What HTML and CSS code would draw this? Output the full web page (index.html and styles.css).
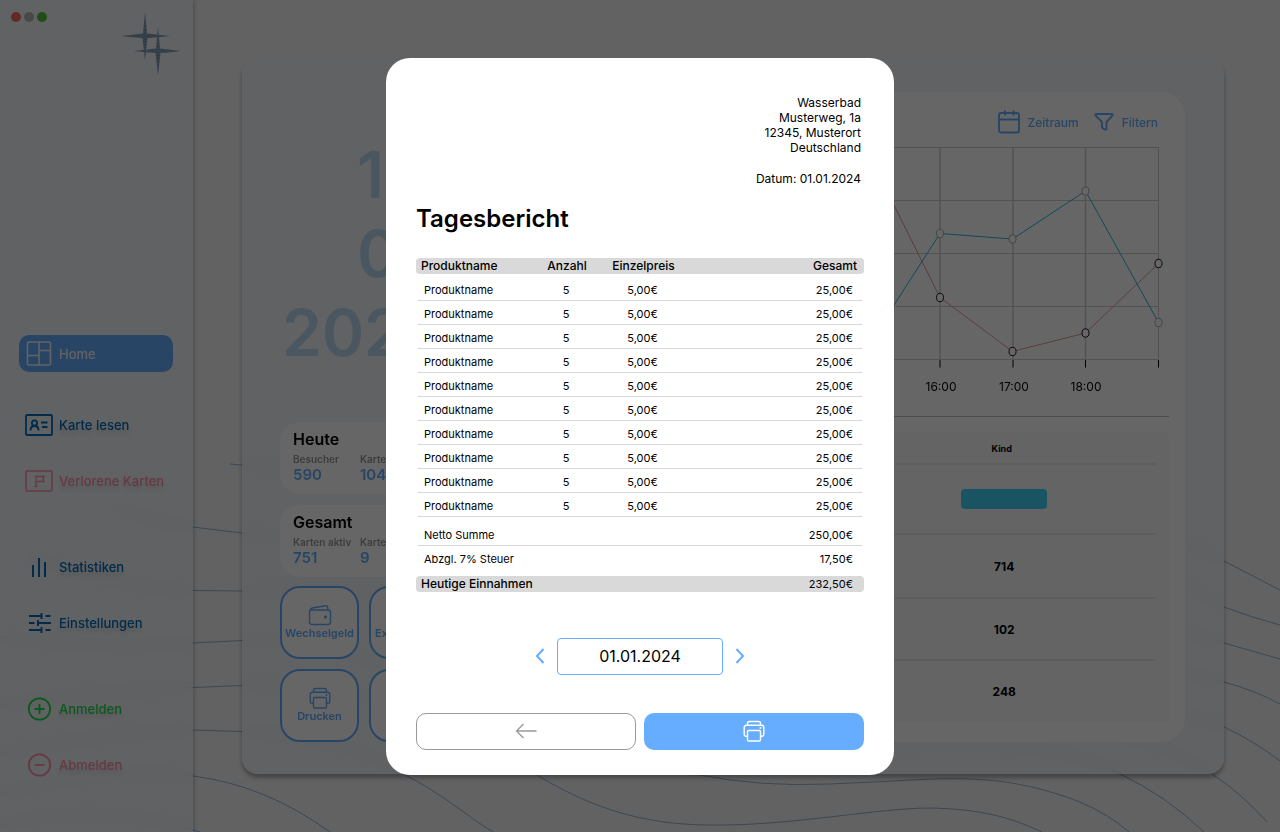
FILE: index.html
```html
<!DOCTYPE html>
<html lang="de">
<head>
<meta charset="utf-8">
<meta name="viewport" content="width=device-width, initial-scale=1">
<title>Tagesbericht</title>
<link rel="stylesheet" href="styles.css">
</head>
<body>
<svg width="0" height="0" class="defs" aria-hidden="true">
  <symbol id="printer" viewBox="0 0 22 22">
    <g fill="none" stroke="currentColor" stroke-width="1.4" stroke-linejoin="round">
      <path d="M4.5 5.2V3.4Q4.5 1.5 6.4 1.5h9.2q1.9 0 1.9 1.9v1.8"/>
      <path d="M4 16.3H3.2Q1.2 16.3 1.2 14.3V7.6Q1.2 5.2 3.6 5.2h14.8q2.4 0 2.4 2.4v6.7q0 2-2 2H18"/>
      <rect x="4.5" y="10.5" width="13" height="10.5" rx="1.2"/>
      <path d="M16.6 8h1.6" stroke-width="1.8"/>
    </g>
  </symbol>
</svg>

<div class="app">
  <svg class="waves" viewBox="0 0 1280 832" preserveAspectRatio="none" aria-hidden="true">
    <path d="M230 464C330 475 390 430 500 400S800 330 1000 420S1120 510 1224 561L1280 590"/>
    <path d="M120 508C150 520 170 524 193 527L242 533C500 560 900 400 1224 607Q1250 617 1280 625"/>
    <path d="M30 558C100 580 150 590 193 590.500L242 591C600 590 900 560 1185 632L1224 643L1280 659"/>
    <path d="M0 637Q100 650 193 643L242 640.500C400 630 560 775 700 775Q760 787 830 784L894 781C960 777 1010 775 1080 802Q1110 815 1129 832"/>
    <path d="M0 706Q100 690 193 687.500L242 685.500C400 690 450 710 537 775C610 820 670 826 726 825C800 824 880 808 930 808C980 809 1010 817 1042 832"/>
    <path d="M0 754Q100 733 193 730L242 731.500C320 735 370 750 405 775C440 792 465 815 493 832"/>
    <path d="M0 795Q100 765 193 776Q265 785 330 832"/>
    <path d="M0 825Q100 802 193 830L200 832"/>
    <path d="M894 650C1020 650 1120 650 1185 673Q1205 677 1224 682Q1254 690 1280 704"/>
    <path d="M894 700C1000 685 1120 690 1185 714L1224 727Q1254 741 1280 761"/>
    <path d="M860 748C970 742 1050 738 1120 774Q1165 795 1204 832"/>
    <path d="M1080 732Q1150 732 1212 774Q1240 792 1267 822"/>
  </svg>

  <aside class="sidebar">
    <div class="sidebar-top">
      <div class="lights"><span class="light red"></span><span class="light gray"></span><span class="light green"></span></div>
      <svg class="logo" width="60" height="64" viewBox="0 0 60 64" role="img" aria-label="Logo">
        <defs>
          <pattern id="ripple" width="8" height="3" patternUnits="userSpaceOnUse" patternTransform="rotate(18)">
            <rect width="8" height="3" fill="#7390ab"/>
            <path d="M0 1.500Q2 .500 4 1.500T8 1.500" fill="none" stroke="#c3d3e2" stroke-width=".6"/>
          </pattern>
        </defs>
        <path fill="url(#ripple)" d="M24 0L26 21.500Q38 22.500 49 24Q38 25.500 26.500 26L24 48L21.500 26Q12 25.500 0 24Q12 22.500 22 21.500Z"/>
        <path fill="url(#ripple)" d="M37 15L39 36.500Q50 37.500 60 39Q50 40.500 39.500 41L37 63L34.500 41Q25 40.500 13 39Q25 37.500 35 36.500Z"/>
      </svg>
    </div>
    <nav class="nav">
      <div class="nav-group">
        <a class="nav-item active" href="#"><svg viewBox="0 0 28 28" width="28" height="28"><g fill="none" stroke="currentColor" stroke-width="1.600"><rect x="2.500" y="2" width="23" height="23" rx="1.500"/><path d="M14 2v23M2.500 15.500H14M14 10.500h11.500"/></g></svg>Home</a>
      </div>
      <div class="nav-group">
        <a class="nav-item" href="#"><svg viewBox="0 0 28 28" width="28" height="28"><g fill="none" stroke="currentColor" stroke-width="1.800"><rect x="1" y="4" width="26" height="20" rx="1"/><circle cx="9.500" cy="12" r="2.600"/><path d="M5.500 19.500q0-4.500 4-4.500t4 4.500M16 11.500h6.500M17 16h5.500"/></g></svg>Karte lesen</a>
        <a class="nav-item pink" href="#"><svg viewBox="0 0 28 28" width="28" height="28"><g fill="none" stroke="currentColor" stroke-width="1.600"><rect x="1" y="4" width="26" height="20" rx="1"/><path d="M11 19.500V9.500h8l-1 2.500 1 2.500h-8M9.500 19.500h3" stroke-width="1.300"/></g></svg>Verlorene Karten</a>
      </div>
      <div class="nav-group wide">
        <a class="nav-item" href="#"><svg viewBox="0 0 28 28" width="28" height="28"><path d="M8 12v12M14 5v19M20 9v15" stroke="currentColor" stroke-width="2"/></svg>Statistiken</a>
        <a class="nav-item" href="#"><svg viewBox="0 0 28 28" width="28" height="28"><path d="M4 7h12M20.500 7h5M16.500 4v6M4 14h5.500M13 14h13M13 11v6M4 21h12M20.500 21h5M16.500 18v6" stroke="currentColor" stroke-width="1.900"/></svg>Einstellungen</a>
      </div>
      <div class="nav-group wide">
        <a class="nav-item green" href="#"><svg viewBox="0 0 28 28" width="28" height="28"><g fill="none" stroke="currentColor" stroke-width="1.800"><circle cx="14.500" cy="14" r="10.700"/><path d="M14.500 9v10M9.500 14h10"/></g></svg>Anmelden</a>
        <a class="nav-item pink" href="#"><svg viewBox="0 0 28 28" width="28" height="28"><g fill="none" stroke="currentColor" stroke-width="1.800"><circle cx="14.500" cy="14" r="10.700"/><path d="M9.500 14h10"/></g></svg>Abmelden</a>
      </div>
    </nav>
  </aside>

  <main class="main">
    <div class="panel">
      <section class="overview">
        <div class="date"><span class="short">1</span><span class="short">0</span><span>202</span></div>
        <div class="card">
          <h2>Heute</h2>
          <dl><div><dt>Besucher</dt><dd>590</dd></div><div><dt>Karten</dt><dd>104</dd></div></dl>
        </div>
        <div class="card">
          <h2>Gesamt</h2>
          <dl><div><dt>Karten aktiv</dt><dd>751</dd></div><div><dt>Karten</dt><dd>9</dd></div></dl>
        </div>
        <div class="tiles">
          <button type="button" class="tile"><svg width="24" height="22" viewBox="0 0 24 22"><g fill="none" stroke="currentColor" stroke-width="1.400" stroke-linejoin="round"><rect x="1.500" y="6" width="21" height="14.500" rx="2.500"/><path d="M2 7Q2 4.500 4.500 4L17.500 1.700Q19.500 1.500 19.700 3.500V6"/></g><circle cx="17.500" cy="13" r="1.600" fill="currentColor"/></svg>Wechselgeld</button>
          <button type="button" class="tile cut">Ex</button>
          <button type="button" class="tile"><svg width="22" height="22"><use href="#printer"/></svg>Drucken</button>
          <button type="button" class="tile" aria-label="Weitere"></button>
        </div>
      </section>

      <section class="stats">
        <div class="tools">
          <button type="button"><svg width="22" height="24" viewBox="0 0 22 24"><g fill="none" stroke="currentColor" stroke-width="1.900"><rect x="1" y="3" width="20" height="19.500" rx="2"/><path d="M1 9.500h20M7 .500v5M15.500 .500v5"/></g></svg>Zeitraum</button>
          <button type="button"><svg width="20" height="20" viewBox="0 0 20 20"><path d="M1.500 2h17v1.500L12.500 10v7.500h-2L8 15.500V10L1.500 3.500Z" fill="none" stroke="currentColor" stroke-width="1.900" stroke-linejoin="round"/></svg>Filtern</button>
        </div>
        <svg class="chart" width="633" height="256" viewBox="536 144 633 256" role="img" aria-label="Besucher pro Stunde">
          <path class="grid" d="M576 147.500h582.500M576 200.500h582.500M576 253.500h582.500M576 306.500h582.500M576 359.500h582.500"/>
          <path class="grid thick" d="M867.500 147.500v212M940 147.500v212M1013 147.500v212M1085.500 147.500v212"/>
          <path class="grid" d="M1158.500 147.500v212"/>
          <path class="tick" d="M940 360v7.500M1013 360v7.500M1085.500 360v7.500M1158.500 360v7.500"/>
          <path class="line red" d="M867 151L940 297.500L1012.500 351.500L1085.500 333L1158.500 263.500"/>
          <path class="line cyan" d="M867 347L940 233.500L1012.500 239L1085.500 191L1158.500 322.500"/>
          <g class="dots light-dots"><ellipse cx="940" cy="233.500" rx="3.500" ry="4.200"/><ellipse cx="1012.500" cy="239" rx="3.500" ry="4.200"/><ellipse cx="1085.500" cy="191" rx="3.500" ry="4.200"/><ellipse cx="1158.500" cy="322.500" rx="3.500" ry="4.200"/></g>
          <g class="dots"><ellipse cx="940" cy="297.500" rx="3.500" ry="4.200"/><ellipse cx="1012.500" cy="351.500" rx="3.500" ry="4.200"/><ellipse cx="1085.500" cy="333" rx="3.500" ry="4.200"/><ellipse cx="1158.500" cy="263.500" rx="3.500" ry="4.200"/></g>
          <g class="hours"><text x="941" y="391">16:00</text><text x="1014" y="391">17:00</text><text x="1086" y="391">18:00</text></g>
        </svg>
        <div class="groups">
          <table>
            <thead><tr><th></th><th>Kind</th></tr></thead>
            <tbody>
              <tr class="tall"><td></td><td><span class="chip"></span></td></tr>
              <tr><td></td><td>714</td></tr>
              <tr><td></td><td>102</td></tr>
              <tr><td></td><td>248</td></tr>
            </tbody>
          </table>
        </div>
      </section>
    </div>
  </main>
</div>

<div class="overlay">
  <div class="report" role="dialog" aria-modal="true" aria-labelledby="report-title">
    <address>Wasserbad<br>Musterweg, 1a<br>12345, Musterort<br>Deutschland</address>
    <p class="report-date">Datum: 01.01.2024</p>
    <h1 id="report-title">Tagesbericht</h1>
    <table class="items">
      <colgroup><col class="c-name"><col class="c-count"><col class="c-price"><col></colgroup>
      <thead><tr class="band"><th>Produktname</th><th>Anzahl</th><th>Einzelpreis</th><th>Gesamt</th></tr></thead>
      <tbody class="products">
        <tr><td>Produktname</td><td>5</td><td>5,00€</td><td>25,00€</td></tr>
        <tr><td>Produktname</td><td>5</td><td>5,00€</td><td>25,00€</td></tr>
        <tr><td>Produktname</td><td>5</td><td>5,00€</td><td>25,00€</td></tr>
        <tr><td>Produktname</td><td>5</td><td>5,00€</td><td>25,00€</td></tr>
        <tr><td>Produktname</td><td>5</td><td>5,00€</td><td>25,00€</td></tr>
        <tr><td>Produktname</td><td>5</td><td>5,00€</td><td>25,00€</td></tr>
        <tr><td>Produktname</td><td>5</td><td>5,00€</td><td>25,00€</td></tr>
        <tr><td>Produktname</td><td>5</td><td>5,00€</td><td>25,00€</td></tr>
        <tr><td>Produktname</td><td>5</td><td>5,00€</td><td>25,00€</td></tr>
        <tr><td>Produktname</td><td>5</td><td>5,00€</td><td>25,00€</td></tr>
      </tbody>
      <tbody class="sums">
        <tr class="net"><td colspan="3">Netto Summe</td><td>250,00€</td></tr>
        <tr class="tax"><td colspan="3">Abzgl. 7% Steuer</td><td>17,50€</td></tr>
      </tbody>
      <tfoot><tr class="band"><th colspan="3">Heutige Einnahmen</th><td>232,50€</td></tr></tfoot>
    </table>
    <div class="picker">
      <button type="button" aria-label="Vorheriger Tag"><svg width="10" height="16" viewBox="0 0 10 16"><path d="M8.500 1L2 8l6.500 7" fill="none" stroke="currentColor" stroke-width="2"/></svg></button>
      <input type="text" value="01.01.2024" aria-label="Datum">
      <button type="button" aria-label="Nächster Tag"><svg width="10" height="16" viewBox="0 0 10 16"><path d="M1.500 1L8 8l-6.500 7" fill="none" stroke="currentColor" stroke-width="2"/></svg></button>
    </div>
    <div class="actions">
      <button type="button" class="back" aria-label="Zurück"><svg width="22" height="16" viewBox="0 0 22 16"><path d="M21.500 8H1.500M8.500 1L1.500 8l7 7" fill="none" stroke="currentColor" stroke-width="1.300"/></svg></button>
      <button type="button" class="print" aria-label="Drucken"><svg width="22" height="22"><use href="#printer"/></svg></button>
    </div>
  </div>
</div>
</body>
</html>
```
FILE: styles.css
```css
* { box-sizing: border-box; }

body {
  margin: 0;
  font-family: Inter, "Liberation Sans", sans-serif;
  font-size: 12px;
  color: #000;
  background: #f5f5f5;
}

h1, h2, p, dl, dd { margin: 0; }
button { font: inherit; cursor: pointer; padding: 0; border: 0; background: none; }
svg { display: block; flex: none; }
.defs { position: absolute; }

.app {
  position: relative;
  display: grid;
  grid-template-columns: 193px 1fr;
  min-height: 100vh;
  overflow: hidden;
}

.waves { position: absolute; inset: 0; width: 100%; height: 100%; }
.waves path { fill: none; stroke: #8fb3d4; stroke-width: 1; }

.sidebar {
  position: relative;
  background: rgba(236, 243, 250, .7);
  backdrop-filter: blur(6px);
  box-shadow: 1px 0 4px rgba(0, 0, 0, .25);
  padding: 12px 12px 0 11px;
}
.sidebar-top { display: flex; justify-content: space-between; height: 323px; }
.lights { display: flex; gap: 3px; }
.light { width: 10px; height: 10px; border-radius: 50%; }
.light.red { background: #ef6a5e; }
.light.gray { background: #b4b4b4; }
.light.green { background: #53c43b; }

.nav { display: flex; flex-direction: column; gap: 35px; padding: 0 8px; }
.nav-group { display: flex; flex-direction: column; gap: 20px; }
.nav-group.wide { margin-top: 15px; }
.nav-item {
  display: flex;
  align-items: center;
  gap: 6px;
  height: 36px;
  padding-left: 6px;
  border-radius: 10px;
  color: #006cb8;
  font-size: 13px;
  font-weight: 500;
  text-decoration: none;
  white-space: nowrap;
  text-shadow: 0 4px 4px rgba(0, 0, 0, .12);
}
.nav-item.active { height: 37px; background: #66adff; color: #f5f5f5; text-shadow: none; }
.nav-item.pink { color: #ff8fa3; }
.nav-item.green { color: #1edc46; }

.main { position: relative; padding: 58px 56px 58px 49px; }
.panel {
  display: grid;
  grid-template-columns: 216px 1fr;
  gap: 24px;
  height: 100%;
  padding: 34px 39px 32px 38px;
  border-radius: 16px;
  background: rgba(236, 243, 250, .7);
  backdrop-filter: blur(6px);
  box-shadow: 0 4px 4px rgba(0, 0, 0, .3);
}

.overview { display: flex; flex-direction: column; gap: 11px; }
.date {
  display: flex;
  flex-direction: column;
  height: 319px;
  padding: 43px 0 0 2px;
  font-size: 64px;
  line-height: 79px;
  font-weight: 600;
  color: #b8d9f3;
}
.date .short { padding-left: 75px; }
.card { height: 72px; padding: 7px 13px; border-radius: 20px; background: #fff; }
.card h2 { font-size: 16px; line-height: 20px; font-weight: 600; }
.card dl { display: grid; grid-template-columns: 67px 1fr; font-weight: 600; white-space: nowrap; padding-top: 4px; }
.card dt { font-size: 10px; line-height: 13px; color: #999; }
.card dd { font-size: 15px; line-height: 18px; color: #66adff; }
.tiles { display: grid; grid-template-columns: 79px 79px; gap: 10px; margin-top: -2px; }
.tile {
  display: flex;
  flex-direction: column;
  align-items: center;
  justify-content: center;
  height: 73px;
  padding-bottom: 1px;
  border: 2px solid #66adff;
  border-radius: 20px;
  background: #fff;
  color: #66adff;
  font-size: 11px;
  line-height: 14px;
  font-weight: 600;
}
.tile.cut { align-items: flex-start; padding: 21px 0 0 4px; }

.stats { padding: 18px 16px 20px; border-radius: 24px; background: #fff; }
.tools { display: flex; justify-content: flex-end; gap: 15px; padding-right: 11px; height: 24px; }
.tools button { display: flex; align-items: center; gap: 8px; color: #66adff; font-weight: 500; }

.chart { margin: 10px 0 0 auto; }
.grid { stroke: #cdcdcd; fill: none; }
.grid.thick { stroke-width: 1.5; }
.tick { stroke: #000; }
.line { fill: none; stroke-width: 1; }
.line.red { stroke: #e09a9a; }
.line.cyan { stroke: #2fb4dc; }
.dots { fill: #fff; stroke: #151530; }
.light-dots { stroke: #a5ada5; }
.hours { font-size: 12px; text-anchor: middle; }

.groups { margin-top: 33px; padding: 0 13px; border-radius: 4px; background: #f9f9f9; position: relative; }
.groups::before { content: ""; position: absolute; left: 0; right: 0; top: -17px; border-top: 1px solid #bdbdbd; }
.groups table { width: 100%; border-collapse: collapse; table-layout: fixed; }
.groups th, .groups td { padding: 0; text-align: center; font-weight: 700; font-size: 12px; height: 62px; }
.groups th { font-size: 9px; height: 31px; padding-right: 5px; }
.groups .tall td { height: 70px; }
.groups .tall + tr td { height: 64px; }
.groups thead tr, .groups tbody tr:not(:last-child) { border-bottom: 2px solid #ececec; }
.chip { display: inline-block; width: 86px; height: 20px; border-radius: 4px; background: #3fd2f7; vertical-align: middle; }

.overlay {
  position: fixed;
  inset: 0;
  display: flex;
  align-items: center;
  justify-content: center;
  background: rgba(0, 0, 0, .6);
}
.report { width: 508px; padding: 37px 30px 25px; border-radius: 24px; background: #fff; }
.report address, .report-date { padding-right: 3px; text-align: right; font-style: normal; line-height: 15px; }
.report-date { margin-top: 16px; }
.report h1 { margin-top: 17px; font-size: 24px; line-height: 32px; font-weight: 600; }

.items { width: 100%; margin-top: 23px; border-collapse: separate; border-spacing: 0; table-layout: fixed; }
.c-name { width: 120px; }
.c-count { width: 62px; }
.c-price { width: 91px; }
.items th, .items td { padding: 0 11px 0 8px; font-size: 11px; line-height: 14px; text-align: center; }
.items td { vertical-align: bottom; padding-bottom: 4px; }
.items th { font-size: 12px; line-height: 16px; font-weight: 500; padding: 0 7px 0 5px; }
.items th:nth-child(2), .items th:nth-child(3) { padding: 0; }
.items td:nth-child(2), .items td:nth-child(3) { padding-left: 0; padding-right: 2px; }
.items tr > :first-child { text-align: left; }
.items tr > :last-child { text-align: right; }
.sums td:last-child, .items tfoot td:last-child { padding-left: 0; padding-right: 11px; }
.band th, .band td { height: 16px; background: #d9d9d9; }
.items .band td { padding-bottom: 0; vertical-align: middle; }
.band > :first-child { border-radius: 4px 0 0 4px; }
.band > :last-child { border-radius: 0 4px 4px 0; }
.products tr, .net { background: linear-gradient(#d9d9d9, #d9d9d9) center bottom / calc(100% - 4px) 1px no-repeat; }
.products td { height: 24px; }
.products tr:first-child td { height: 27px; }
.net td { height: 29px; }
.items .tax td { height: 30px; padding-bottom: 10px; }

.picker { display: flex; align-items: center; justify-content: center; gap: 12px; margin-top: 46px; color: #66adff; }
.picker button { color: inherit; }
.picker input {
  width: 166px;
  height: 37px;
  border: 1px solid #66adff;
  border-radius: 4px;
  background: #fff;
  font: inherit;
  font-size: 16px;
  color: #000;
  text-align: center;
}

.actions { display: grid; grid-template-columns: 1fr 1fr; gap: 8px; margin-top: 38px; }
.actions button { display: flex; align-items: center; justify-content: center; height: 37px; border-radius: 10px; }
.actions .back { border: 1px solid #999; color: #999; }
.actions .print { background: #66adff; color: #fff; }
```
